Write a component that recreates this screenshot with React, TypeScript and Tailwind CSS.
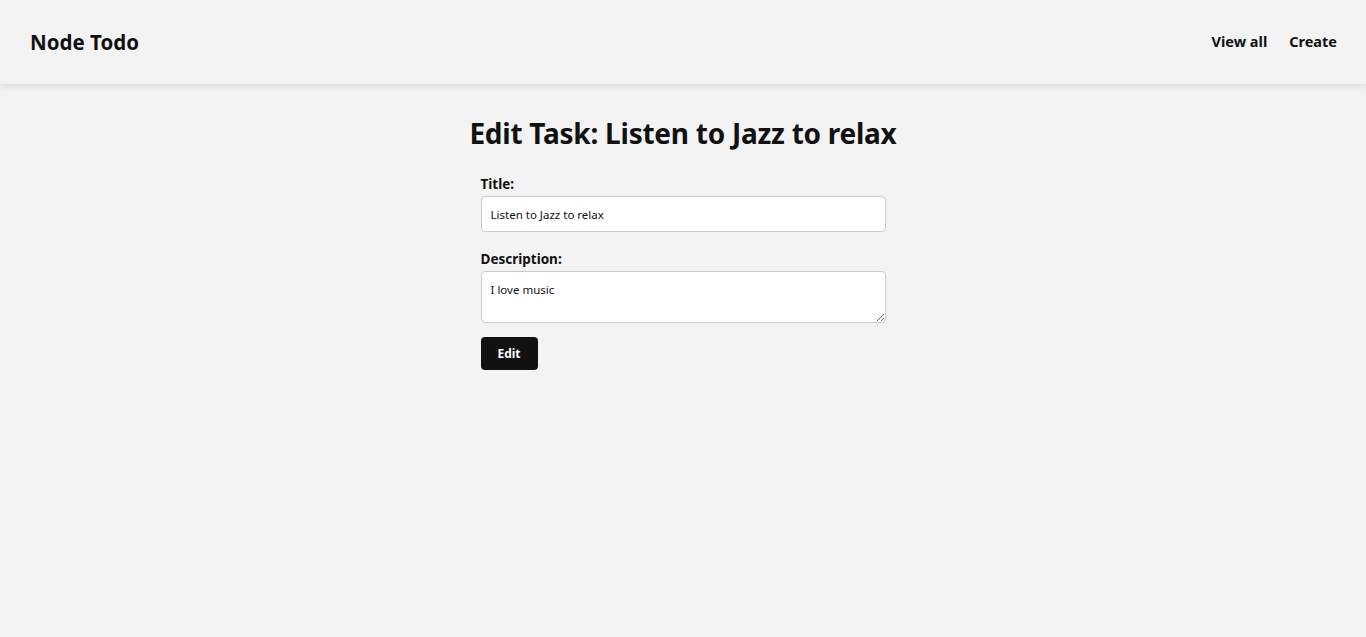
const App = () => {
  return (
    <div className="min-h-screen bg-[#f3f3f3] text-[#111111]" style={{ fontFamily: '"Noto Sans", "Open Sans", sans-serif' }}>
      {/* header */}
      <header className="flex h-[84px] items-center justify-between bg-[#f3f3f3] pl-[30px] pr-[29px] shadow-[0_2px_8px_rgba(0,0,0,0.12)]">
        <h1 className="text-[20.5px] font-bold">Node Todo</h1>
        <nav className="flex gap-[22px] text-[14.5px] font-bold">
          <a href="#">View all</a>
          <a href="#">Create</a>
        </nav>
      </header>

      <main className="flex flex-col items-center pt-[30px]">
        <h2 className="text-[28px] font-bold leading-[38px] tracking-[-0.25px]">Edit Task: Listen to Jazz to relax</h2>

        <form className="mt-[23px] flex w-[405px] flex-col">
          <label className="text-[13.5px] font-bold leading-[18px]">Title:</label>
          <input
            defaultValue="Listen to Jazz to relax"
            className="mt-[3px] h-[36px] rounded-[4px] border border-[#cccccc] bg-white px-[9px] text-[11.5px] outline-none"
          />
          <label className="mt-[18px] text-[13.5px] font-bold leading-[18px]">Description:</label>
          <textarea
            defaultValue="I love music"
            className="mt-[3px] h-[52px] rounded-[4px] border border-[#cccccc] bg-white px-[9px] py-[10px] text-[11.5px] leading-[16px] outline-none"
          />
          <button
            type="button"
            className="mt-[14px] h-[33px] w-[57px] rounded-[4px] bg-[#111111] text-[12px] font-bold text-white"
          >
            Edit
          </button>
        </form>
      </main>
    </div>
  );
};

export default App;
